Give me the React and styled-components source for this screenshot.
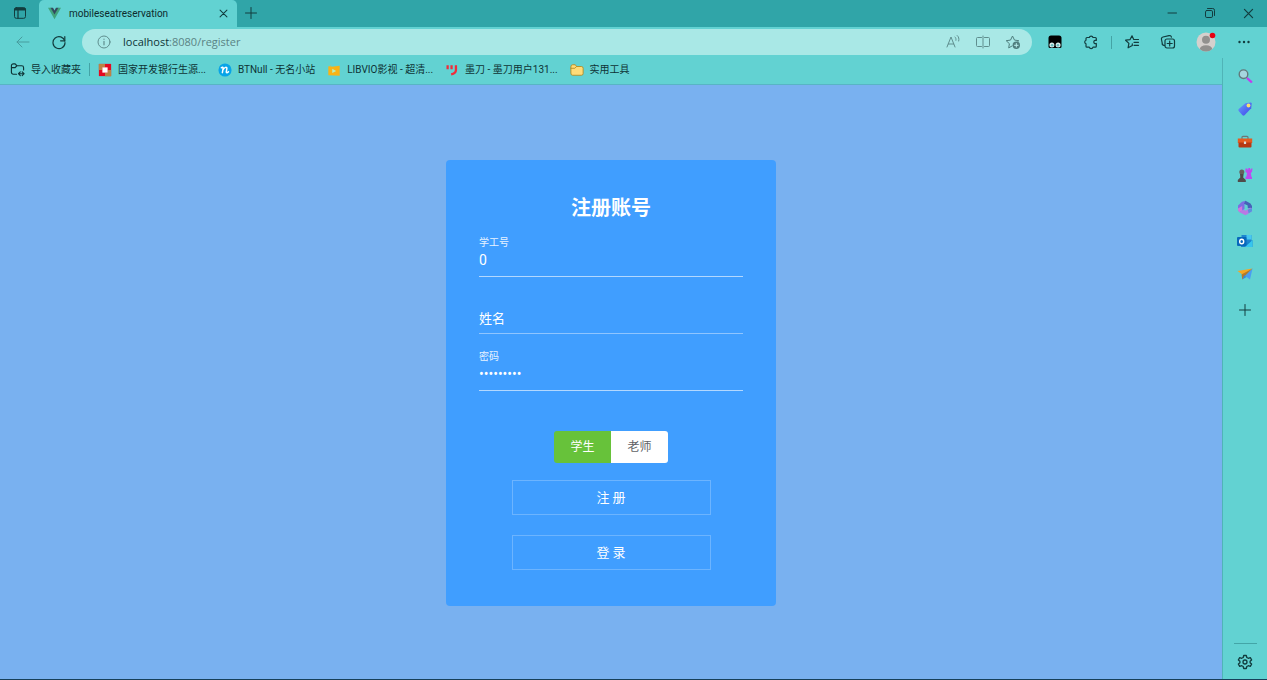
import React, { useState } from "react";
import styled, { createGlobalStyle, css } from "styled-components";

const UI_FONT = `Roboto, "Noto Sans CJK SC", sans-serif`;

const GlobalStyle = createGlobalStyle`
  *, *::before, *::after { box-sizing: border-box; }
  body { margin: 0; font-family: ${UI_FONT}; color: #10393b; }
  button, input { font-family: inherit; }
`;

const Window = styled.div`
  display: flex;
  flex-direction: column;
  min-height: 100vh;
  background: #62d2d2;
  border-bottom: 1px solid #17405a;
`;

const IconButton = styled.button`
  display: flex;
  flex: none;
  align-items: center;
  justify-content: center;
  width: ${(p) => p.$width || 36}px;
  height: ${(p) => p.$height || 26}px;
  padding: 0;
  border: 0;
  background: none;
  color: ${(p) => p.$color || "#123c3e"};
`;

const TabStrip = styled.header`
  display: flex;
  height: 27px;
  background: #30a5a8;
`;

const Tab = styled.div`
  display: flex;
  align-items: center;
  width: 198px;
  padding-left: 9px;
  background: #62d2d2;
  border-radius: 5px 5px 0 0;
`;

const TabTitle = styled.span`
  flex: 1;
  margin-left: 8px;
  font-size: 10px;
  line-height: 16px;
  color: #0c2b2d;
`;

const WindowControls = styled.div`
  display: flex;
  margin-left: auto;
`;

const Toolbar = styled.nav`
  display: flex;
  align-items: center;
  height: 31px;
  padding: 0 5px 1px 5px;
`;

const AddressBar = styled.div`
  display: flex;
  flex: 1;
  align-items: center;
  height: 26px;
  margin: 0 5px;
  padding: 0 4px 0 14px;
  border-radius: 13px;
  background: #a9e8e6;
  color: #5f8e8e;
`;

const AddressField = styled.div`
  display: grid;
  flex: 1;
  margin-left: 11px;
  font-family: "Open Sans", "Noto Sans", sans-serif;
  font-size: 11px;
  line-height: 18px;
`;

const AddressText = styled.a`
  justify-self: start;
  color: #5a8384;
  text-decoration: none;
`;

const Host = styled.span`
  color: #0d3436;
`;

const Divider = styled.span`
  flex: none;
  width: 1px;
  height: 13px;
  margin: 0 ${(p) => p.$space || 0}px;
  background: #44a3a5;
`;

const Body = styled.div`
  display: flex;
  flex: 1;
`;

const Content = styled.div`
  display: flex;
  flex: 1;
  flex-direction: column;
  min-width: 0;
`;

const BookmarkBar = styled.nav`
  display: flex;
  align-items: center;
  gap: 8px;
  height: 27px;
  padding: 0 10px 3px;
  border-bottom: 1px solid #58b5c4;
`;

const Bookmark = styled.a`
  display: flex;
  align-items: center;
  gap: 6px;
  margin-right: ${(p) => (p.$first ? 0 : 4)}px;
  font-size: 10px;
  line-height: 16px;
  color: #0e3335;
  text-decoration: none;
  white-space: nowrap;
`;

const Page = styled.main`
  display: flex;
  flex: 1;
  justify-content: center;
  align-items: flex-start;
  padding: 75px 0 73px;
  background: #79b1f0;
`;

const Card = styled.form`
  display: flex;
  flex-direction: column;
  width: 330px;
  padding: 36px 33px;
  border-radius: 4px;
  background: #409eff;
  color: #fff;
`;

const Title = styled.h1`
  margin: 0;
  font-size: 20px;
  line-height: 24px;
  text-align: center;
`;

const Field = styled.div`
  display: flex;
  flex-direction: column;
  height: 57px;
  padding-top: ${(p) => (p.$empty ? 29 : 14)}px;
  border-bottom: 1px solid ${(p) => (p.$empty ? "#8fc5ff" : "#b3d8ff")};
`;

const FieldLabel = styled.label`
  font-size: 10px;
  line-height: 18px;
  color: #e8f3ff;
`;

const FieldInput = styled.input`
  width: 100%;
  height: 16px;
  padding: 0;
  border: 0;
  outline: 0;
  background: none;
  color: #fff;
  font-size: 14px;
  line-height: 16px;
  &::placeholder { color: #fff; font-size: 13px; opacity: 1; }
  ${(p) => p.$tall && css`height: 24px;`}
`;

const RoleGroup = styled.fieldset`
  display: flex;
  align-self: center;
  margin: 40px 0 17px;
  padding: 0;
  border: 0;
  border-radius: 3px;
  overflow: hidden;
`;

const RoleOption = styled.label`
  width: 57px;
  height: 32px;
  font-size: 12px;
  line-height: 32px;
  text-align: center;
  color: ${(p) => (p.$active ? "#fff" : "#606266")};
  background: ${(p) => (p.$active ? "#67c23a" : "#fff")};
`;

const HiddenRadio = styled.input`
  position: absolute;
  width: 1px;
  height: 1px;
  margin: 0;
  opacity: 0;
`;

const ActionButton = styled.button`
  align-self: center;
  width: 199px;
  height: 35px;
  padding: 0 0 2px;
  border: 1px solid #6cb4ff;
  background: transparent;
  color: #fff;
  font-size: 13px;
  & + & { margin-top: 20px; }
`;

const Sidebar = styled.aside`
  display: flex;
  flex-direction: column;
  align-items: center;
  width: 45px;
  padding: 1px 0 4px;
  border-left: 1px solid #50b4b7;
`;

const SidebarFooter = styled.div`
  display: flex;
  flex-direction: column;
  align-items: center;
  width: 23px;
  margin-top: auto;
  padding-top: 5px;
  border-top: 1px solid #43a5a7;
`;

const Svg = ({ size = 16, children, ...rest }) => (
  <svg
    width={size}
    height={size}
    viewBox="0 0 16 16"
    fill="none"
    stroke="currentColor"
    strokeWidth="1"
    strokeLinecap="round"
    strokeLinejoin="round"
    aria-hidden="true"
    {...rest}
  >
    {children}
  </svg>
);

const WorkspaceIcon = () => (
  <Svg>
    <rect x="2.5" y="2.7" width="11" height="10.6" rx="1.8" />
    <path d="M2.5 4.2h11M2.5 5h11M6 5v8" strokeWidth="1.2" />
    <path d="M3.5 3.5h9" strokeWidth="1.6" />
  </Svg>
);
const VueIcon = () => (
  <Svg size={13} stroke="none">
    <path d="M0 1h4l4 7 4-7h4L8 15z" fill="#41a37c" />
    <path d="M3.2 1h3L8 4.2 9.800 1h3L8 9.300z" fill="#34495e" />
  </Svg>
);
const CloseIcon = ({ size = 12 }) => (
  <Svg size={size}><path d="M3 3l10 10M13 3L3 13" strokeWidth="1.500" /></Svg>
);
const PlusIcon = () => (
  <Svg><path d="M8 2.500v11M2.500 8h11" /></Svg>
);
const MinimizeIcon = () => <Svg><path d="M4 8h8.500" /></Svg>;
const RestoreIcon = () => (
  <Svg>
    <rect x="3.500" y="5.500" width="7" height="7" rx="1.300" />
    <path d="M5.500 3.500h5.200a1.800 1.800 0 0 1 1.800 1.800v5.200" />
  </Svg>
);
const BackIcon = () => <Svg><path d="M14 8H2M7 3L2 8l5 5" /></Svg>;
const ReloadIcon = () => (
  <Svg>
    <path d="M13.800 7.100a6 6 0 1 0 .2 1.600" strokeWidth="1.200" />
    <path d="M13.800 2.500v4.300H9.600" strokeWidth="1.200" />
  </Svg>
);
const InfoIcon = () => (
  <Svg>
    <circle cx="8" cy="8" r="6" />
    <path d="M8 7.300v3.500M8 5v.3" strokeWidth="1.200" />
  </Svg>
);
const ReadAloudIcon = () => (
  <Svg>
    <path d="M2 13L6 3l4 10M3.300 10h5.400M10 3c.9.900 1.100 1.900.9 3.300M12.200 1.500c1.700 1.400 2 3.300 1.500 5.500" />
  </Svg>
);
const SplitIcon = () => (
  <Svg><path d="M6.500 3.500h-4a1 1 0 0 0-1 1v7a1 1 0 0 0 1 1h4M9.500 3.500h4a1 1 0 0 1 1 1v7a1 1 0 0 1-1 1h-4M8 2v12" /></Svg>
);
const AddFavoriteIcon = () => (
  <Svg>
    <path d="M7 12l-3.300 1.900.7-4.200-3.200-3 4.300-.6L7.500 2l2 4.100 4.300.6-1.300 1.200" />
    <circle cx="11.300" cy="11.300" r="3.700" fill="currentColor" stroke="none" />
    <path d="M11.300 9.500v3.600M9.500 11.300h3.600" stroke="#b9efed" />
  </Svg>
);
const TampermonkeyIcon = () => (
  <Svg stroke="none">
    <path d="M1.500 4Q1.500 1.500 4 1.500h8q2.500 0 2.500 2.500v8.500q0 1.500-1.500 1.500H3q-1.500 0-1.500-1.500z" fill="#000" />
    <circle cx="4.900" cy="11" r="2.500" fill="#d9efed" />
    <circle cx="11.100" cy="11" r="2.500" fill="#d9efed" />
    <circle cx="5.100" cy="11.200" r="1.300" fill="#67b9ba" />
    <circle cx="10.900" cy="11.200" r="1.300" fill="#67b9ba" />
  </Svg>
);
const ExtensionIcon = () => (
  <Svg>
    <path d="M4 3.500h2.300a1.900 1.900 0 0 1 3.700 0h2.300a1 1 0 0 1 1 1v2a1.700 1.700 0 1 0 0 3v2.700a1 1 0 0 1-1 1H10a1.900 1.900 0 0 1-3.700 0H4a1 1 0 0 1-1-1V9.800a1.900 1.900 0 0 1 0-3.600V4.500a1 1 0 0 1 1-1z" strokeWidth="1.200" />
  </Svg>
);
const FavoritesIcon = () => (
  <Svg>
    <path d="M8.300 11.500l-4.200 2.300.8-4.400-3.300-3.200 4.500-.6L8 1.800l1.700 3.700h4.800M10 8.300h4.500M10 11.300h4.500M8.300 11.500V9.800" strokeWidth="1.200" />
  </Svg>
);
const CollectionsIcon = () => (
  <Svg>
    <path d="M4.500 11.500l-.8-.2a2 2 0 0 1-1.500-2.300L1.500 5.500A2 2 0 0 1 3 3l6-1.400a2 2 0 0 1 2.400 1.500" strokeWidth="1.200" />
    <rect x="5" y="5" width="9.500" height="9" rx="2" strokeWidth="1.200" />
    <path d="M9.700 7v5M7.200 9.500h5" strokeWidth="1.200" />
  </Svg>
);
const AvatarIcon = () => (
  <svg width="22" height="22" viewBox="0 0 22 22" aria-hidden="true">
    <defs><clipPath id="avatar"><circle cx="11" cy="11" r="9.500" /></clipPath></defs>
    <circle cx="11" cy="11" r="9.500" fill="#d5d0cd" />
    <g clipPath="url(#avatar)" fill="#92908e">
      <circle cx="11" cy="8.700" r="4" />
      <ellipse cx="11" cy="19" rx="6.500" ry="4.800" />
    </g>
    <circle cx="17.500" cy="4.500" r="2.800" fill="#e60012" />
  </svg>
);
const MoreIcon = () => (
  <Svg stroke="none" fill="currentColor">
    <circle cx="3.500" cy="8" r="1.200" /><circle cx="8" cy="8" r="1.200" /><circle cx="12.500" cy="8" r="1.200" />
  </Svg>
);

const ImportIcon = () => (
  <Svg size={15}>
    <path d="M7 13H3.500a2 2 0 0 1-2-2V4a2 2 0 0 1 2-2h2L7.300 4h5.200a2 2 0 0 1 2 2v2.500M1.500 6h4l1.800-2M9 12.500h6M11 10.500l-2 2 2 2M13 10.500l2 2-2 2" strokeWidth="1.200" />
  </Svg>
);
const BankIcon = () => (
  <Svg size={14} stroke="none">
    <path d="M1 1h14v14H1z" fill="#e50921" />
    <path d="M1 1h7v4H5v3H1zM8 11h3V8h4v7H8z" fill="#bd8343" />
    <path d="M5 5h6v6H5z" fill="#fff" />
  </Svg>
);
const BtIcon = () => (
  <Svg size={14}>
    <circle cx="8" cy="8" r="7.500" fill="#08a4e8" stroke="none" />
    <path d="M3.800 5.500c1.300-1.200 2.300-.8 2 .8L5 11M5.600 8c1.700-3.500 5-4 4.500-1.300l-.6 3.200c-.2 1.500 1 1.500 2.500 0" stroke="#fff" strokeWidth="1.700" />
  </Svg>
);
const VideoIcon = () => (
  <Svg size={14} stroke="none">
    <path d="M2 3.500l2.500.7L3.700 2l1.600 2.300L14.500 3v11.500l-13-.5V4.500z" fill="#f9b316" />
    <path d="M6 6.500v5l4.500-2.500z" fill="#baf1bb" />
  </Svg>
);
const ModaoIcon = () => (
  <Svg size={14} stroke="#f02d3b" strokeWidth="2.600" strokeLinecap="butt">
    <path d="M3 2.500v4.500M7.500 2.500v4.500M12.500 2.500V8q0 4-5.500 5" />
  </Svg>
);
const FolderIcon = () => (
  <Svg size={14} stroke="#b28a21">
    <path d="M1 4a2 2 0 0 1 2-2h3l1.500 2H13a2 2 0 0 1 2 2v6a2 2 0 0 1-2 2H3a2 2 0 0 1-2-2z" fill="#ffdc78" />
    <path d="M1 6h4.500l2-2" />
  </Svg>
);

const SearchIcon = () => (
  <Svg>
    <path d="M10.500 10.500l3.800 3.300" stroke="#c13df0" strokeWidth="2.300" />
    <circle cx="6.500" cy="6.200" r="4.300" fill="#a5d6df" stroke="#62797c" strokeWidth="1.400" />
  </Svg>
);
const TagIcon = () => (
  <Svg stroke="none">
    <defs><linearGradient id="tag" x1="0" y1="0" x2="1" y2="1"><stop stopColor="#65a1ff" /><stop offset="1" stopColor="#4141e8" /></linearGradient></defs>
    <path d="M8.500 2.200l5-.8q1.200 0 1.200 1.200l-.5 4.700-6.700 6.900q-1 .9-2 0L1.700 10q-.8-1 0-2z" fill="url(#tag)" />
    <circle cx="11.500" cy="4.500" r="1.900" fill="#f9df70" />
  </Svg>
);
const ToolboxIcon = () => (
  <Svg stroke="none">
    <path d="M5 5V3.300q0-1 1-1h4q1 0 1 1V5" stroke="#6d7777" strokeWidth="1.200" />
    <path d="M.8 4.500h14.400V9H.8z" fill="#e55b20" />
    <path d="M1.500 8.500h13v4q0 1-1 1h-11q-1 0-1-1z" fill="#b73814" />
    <path d="M6.900 7.500h2.200v2.500H6.900z" fill="#ddd" />
  </Svg>
);
const GamesIcon = () => (
  <Svg stroke="none">
    <path d="M8.500 1.500h1.800v1h1V1h1.800v1.500h1V1.500h1.400L15 5l-1.200 1 .7 4H15v2H8.500v-2l1-.5.5-3.500L8.500 5z" fill="#bc4bf1" />
    <circle cx="4.800" cy="5" r="2.500" fill="#66615d" />
    <path d="M3 7h3.600l-.4 3.500L8.800 13v2H.8v-2l2.500-2.500z" fill="#504b4a" />
  </Svg>
);
const OfficeIcon = () => (
  <Svg stroke="none">
    <path d="M5 1.800L9 .7 7.500 4.500V9L3 12.300 1 10.500V5.500z" fill="#7b6ee2" />
    <path d="M8.500.8l5 2.700L15 6v4l-4.300-2.200V5.600L7 3.800z" fill="#4563b8" />
    <path d="M15 8v3.300L8.500 15.300 2.500 12.200 6.500 9.800l2.300 1 4.200-3z" fill="#b978e4" />
    <path d="M1 8.500L5.200 6v4.500L2.500 12.200 1 10.500z" fill="#cf78dd" />
    <path d="M10.700 9.800l4.300-1.800v3.300l-3.300 2z" fill="#5b8fe0" />
  </Svg>
);
const OutlookIcon = () => (
  <Svg stroke="none">
    <path d="M4.500 2h10v9h-10z" fill="#1d86d0" />
    <path d="M9.500 2h5v4.500h-5z" fill="#48c8f2" />
    <path d="M4 7l6 3 5.500-3v7H4z" fill="#1780cb" />
    <path d="M15.500 7v7H8z" fill="#36c5ef" />
    <rect y="4" width="9.500" height="9" rx="1" fill="#0868bb" />
    <ellipse cx="4.700" cy="8.500" rx="2" ry="2.300" stroke="#fff" strokeWidth="1.400" />
  </Svg>
);
const SendIcon = () => (
  <Svg stroke="none">
    <path d="M.5 5L15.500 2.500 6 9z" fill="#f6a723" />
    <path d="M15.500 2.500L13 13.500 7.500 9.500z" fill="#4a9df2" />
    <path d="M15.500 2.500L4.500 8.500l.8 5L8 9.800z" fill="#b47a2c" />
    <path d="M5.300 13.500L7.200 9.200l2.300 1.700z" fill="#338adc" />
  </Svg>
);
const GearIcon = () => (
  <Svg>
    <path d="M6.700 1.500h2.600l.5 2 1.500.8 2-.7 1.300 2.300-1.500 1.400v1.400l1.500 1.400-1.300 2.300-2-.7-1.500.8-.5 2H6.700l-.5-2-1.500-.8-2 .7-1.300-2.300 1.500-1.400V7.300L1.400 5.900l1.300-2.300 2 .7 1.500-.8z" strokeWidth="1.300" />
    <circle cx="8" cy="8" r="2" strokeWidth="1.300" />
  </Svg>
);

const bookmarks = [
  { label: "国家开发银行生源...", Icon: BankIcon },
  { label: "BTNull - 无名小站", Icon: BtIcon },
  { label: "LIBVIO影视 - 超清...", Icon: VideoIcon },
  { label: "墨刀 - 墨刀用户131...", Icon: ModaoIcon },
  { label: "实用工具", Icon: FolderIcon },
];

const sidebarItems = [
  ["搜索", SearchIcon],
  ["购物", TagIcon],
  ["工具", ToolboxIcon],
  ["游戏", GamesIcon],
  ["Microsoft 365", OfficeIcon],
  ["Outlook", OutlookIcon],
  ["发送", SendIcon],
];

function BrowserHeader() {
  return (
    <>
      <TabStrip>
        <IconButton $width={39} aria-label="工作区"><WorkspaceIcon /></IconButton>
        <Tab>
          <VueIcon />
          <TabTitle>mobileseatreservation</TabTitle>
          <IconButton $width={27} aria-label="关闭标签页"><CloseIcon size={11} /></IconButton>
        </Tab>
        <IconButton $width={28} aria-label="新建标签页"><PlusIcon /></IconButton>
        <WindowControls>
          <IconButton $width={38} aria-label="最小化"><MinimizeIcon /></IconButton>
          <IconButton $width={38} aria-label="还原"><RestoreIcon /></IconButton>
          <IconButton $width={38} aria-label="关闭"><CloseIcon size={13} /></IconButton>
        </WindowControls>
      </TabStrip>
      <Toolbar>
        <IconButton $color="#479c9e" aria-label="后退"><BackIcon /></IconButton>
        <IconButton aria-label="刷新"><ReloadIcon /></IconButton>
        <AddressBar>
          <InfoIcon />
          <AddressField>
            <AddressText href="#register"><Host>localhost</Host>:8080/register</AddressText>
          </AddressField>
          <IconButton $width={30} $color="#5f8e8e" aria-label="朗读"><ReadAloudIcon /></IconButton>
          <IconButton $width={30} $color="#5f8e8e" aria-label="分屏"><SplitIcon /></IconButton>
          <IconButton $width={30} $color="#4f7e7e" aria-label="收藏此页"><AddFavoriteIcon /></IconButton>
        </AddressBar>
        <IconButton aria-label="脚本"><TampermonkeyIcon /></IconButton>
        <IconButton aria-label="扩展"><ExtensionIcon /></IconButton>
        <Divider $space={2} />
        <IconButton aria-label="收藏夹"><FavoritesIcon /></IconButton>
        <IconButton aria-label="集锦"><CollectionsIcon /></IconButton>
        <IconButton $width={40} aria-label="个人资料"><AvatarIcon /></IconButton>
        <IconButton aria-label="更多"><MoreIcon /></IconButton>
      </Toolbar>
    </>
  );
}

function RegisterForm() {
  const [role, setRole] = useState("学生");
  return (
    <Card onSubmit={(e) => e.preventDefault()}>
      <Title>注册账号</Title>
      <Field>
        <FieldLabel htmlFor="account">学工号</FieldLabel>
        <FieldInput id="account" defaultValue="0" />
      </Field>
      <Field $empty>
        <FieldInput id="name" aria-label="姓名" placeholder="姓名" $tall />
      </Field>
      <Field>
        <FieldLabel htmlFor="password">密码</FieldLabel>
        <FieldInput id="password" type="password" defaultValue="123456789" />
      </Field>
      <RoleGroup aria-label="身份">
        {["学生", "老师"].map((name) => (
          <RoleOption key={name} $active={role === name}>
            <HiddenRadio type="radio" name="role" checked={role === name} onChange={() => setRole(name)} />
            {name}
          </RoleOption>
        ))}
      </RoleGroup>
      <ActionButton type="submit">注 册</ActionButton>
      <ActionButton type="button">登 录</ActionButton>
    </Card>
  );
}

export default function App() {
  return (
    <Window>
      <GlobalStyle />
      <BrowserHeader />
      <Body>
        <Content>
          <BookmarkBar>
            <Bookmark href="#import" $first><ImportIcon />导入收藏夹</Bookmark>
            <Divider />
            {bookmarks.map(({ label, Icon }) => (
              <Bookmark key={label} href="#bookmark"><Icon />{label}</Bookmark>
            ))}
          </BookmarkBar>
          <Page><RegisterForm /></Page>
        </Content>
        <Sidebar>
          {sidebarItems.map(([name, Icon]) => (
            <IconButton key={name} $height={33} aria-label={name}><Icon /></IconButton>
          ))}
          <IconButton $height={40} aria-label="添加"><PlusIcon /></IconButton>
          <SidebarFooter>
            <IconButton aria-label="设置"><GearIcon /></IconButton>
          </SidebarFooter>
        </Sidebar>
      </Body>
    </Window>
  );
}
